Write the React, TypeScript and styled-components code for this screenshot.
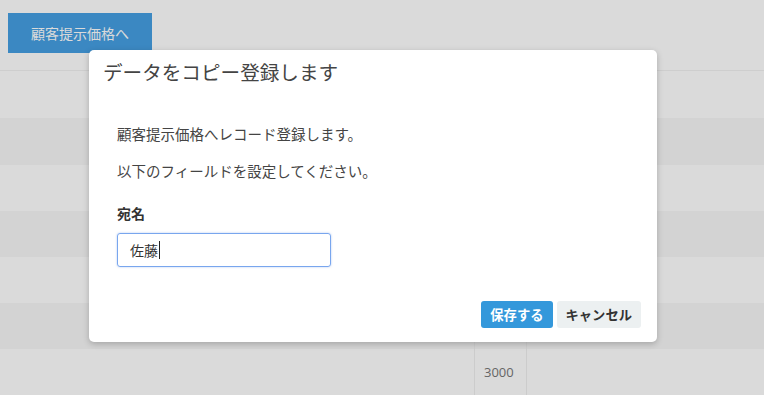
import React from "react";
import styled, { createGlobalStyle } from "styled-components";

const GlobalStyle = createGlobalStyle`
  html, body { margin: 0; padding: 0; }
  body {
    background: #ffffff;
    font-family: "Noto Sans CJK JP", "Open Sans", sans-serif;
    overflow: hidden;
  }
  * { box-sizing: border-box; }
`;

const Page = styled.div`
  position: relative;
  width: 764px;
  height: 395px;
  overflow: hidden;
  background: #ffffff;
`;

const Header = styled.div`
  height: 71px;
  padding: 13px 8px 0;
  border-bottom: 1px solid #f1f1f1;
`;

const NavButton = styled.button`
  width: 144px;
  height: 40px;
  border: none;
  border-radius: 0;
  background: #45a0e3;
  color: #ffffff;
  font-family: "Noto Sans CJK JP", sans-serif;
  font-size: 14px;
  padding: 0;
`;

const Table = styled.div`
  display: flex;
  flex-direction: column;
`;

const Row = styled.div<{ $h: number; $alt: boolean }>`
  display: grid;
  grid-template-columns: 474px 52px 1fr;
  height: ${(p) => p.$h}px;
  background: ${(p) => (p.$alt ? "#f7f7f7" : "#ffffff")};
`;

const Cell = styled.div<{ $border?: boolean }>`
  display: flex;
  align-items: center;
  padding: 0 9px;
  font-family: "Open Sans", sans-serif;
  font-size: 13px;
  color: #777;
  border-left: ${(p) => (p.$border ? "1px solid #efefef" : "none")};
`;

const Overlay = styled.div`
  position: absolute;
  inset: 0;
  background: rgba(0, 0, 0, 0.145);
`;

const Modal = styled.div`
  position: absolute;
  left: 89px;
  top: 50px;
  width: 568px;
  height: 292px;
  background: #ffffff;
  border-radius: 5px;
  box-shadow: 0 2px 6px rgba(0, 0, 0, 0.22);
  display: flex;
  flex-direction: column;
`;

const Title = styled.h2`
  margin: 0;
  padding: 8px 14px 0;
  height: 74px;
  font-size: 19.6px;
  font-weight: 400;
  line-height: 28px;
  color: #444;
`;

const Body = styled.div`
  padding: 0 28px;
  flex: 1;
`;

const Text = styled.p`
  margin: 0 0 17px;
  font-size: 14.5px;
  line-height: 20px;
  color: #444;
`;

const Label = styled.div`
  margin-top: 22px;
  font-size: 14px;
  font-weight: 700;
  line-height: 20px;
  color: #333;
`;

const Input = styled.div`
  margin-top: 10px;
  width: 214px;
  height: 34px;
  border: 1px solid #79a6ee;
  border-radius: 3px;
  box-shadow: 0 0 2px rgba(90, 140, 230, 0.5);
  padding: 0 12px;
  display: flex;
  align-items: center;
  font-size: 14px;
  color: #333;
`;

const Caret = styled.span`
  display: inline-block;
  width: 1px;
  height: 18px;
  background: #222;
  margin-left: 1px;
`;

const Footer = styled.div`
  display: flex;
  justify-content: flex-end;
  gap: 4px;
  padding: 0 16px 14px;
`;

const ActionButton = styled.button<{ $primary?: boolean }>`
  height: 27px;
  padding: 0 9px;
  border: none;
  border-radius: 3px;
  background: ${(p) => (p.$primary ? "#3498db" : "#ecf0f1")};
  color: ${(p) => (p.$primary ? "#ffffff" : "#333")};
  font-family: "Noto Sans CJK JP", sans-serif;
  font-size: 13.3px;
  font-weight: 700;
`;

const rows = [47, 47, 46, 46, 46, 46, 46];

export default function App() {
  return (
    <>
      <GlobalStyle />
      <Page>
        <Header>
          <NavButton>顧客提示価格へ</NavButton>
        </Header>
        <Table>
          {rows.map((h, i) => (
            <Row key={i} $h={h} $alt={i % 2 === 1}>
              <Cell />
              <Cell $border>{i === rows.length - 1 ? "3000" : ""}</Cell>
              <Cell $border />
            </Row>
          ))}
        </Table>
        <Overlay />
        <Modal>
          <Title>データをコピー登録します</Title>
          <Body>
            <Text>顧客提示価格へレコード登録します。</Text>
            <Text>以下のフィールドを設定してください。</Text>
            <Label>宛名</Label>
            <Input>
              佐藤
              <Caret />
            </Input>
          </Body>
          <Footer>
            <ActionButton $primary>保存する</ActionButton>
            <ActionButton>キャンセル</ActionButton>
          </Footer>
        </Modal>
      </Page>
    </>
  );
}
